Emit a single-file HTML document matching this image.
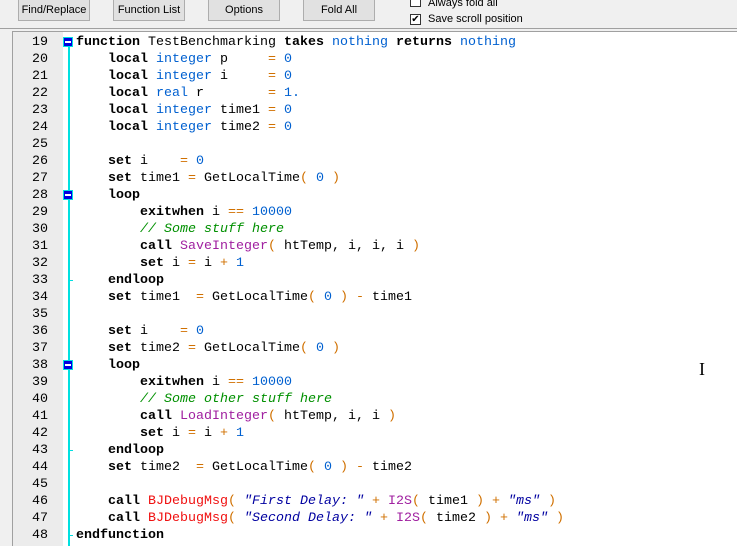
<!DOCTYPE html>
<html><head><style>
body{margin:0;width:737px;height:545px;overflow:hidden;background:#f0f0f0;font-family:"Liberation Sans",sans-serif;position:relative}
.btn{position:absolute;top:-2px;height:23px;width:72px;background:#e1e1e1;border:1px solid #adadad;box-sizing:border-box;font-size:11px;text-align:center;line-height:23px;color:#000}
.tb{position:absolute;left:0;top:0;width:737px;height:28px;border-bottom:1px solid #a0a0a0}
.cb{position:absolute;left:410px;width:11px;height:11px;border:1px solid #333;background:#fff;box-sizing:border-box}
.cl{position:absolute;left:428px;font-size:11px}
.ed{position:absolute;left:12px;top:31px;width:725px;height:514px;border-left:1px solid #a0a0a0;border-top:1px solid #a0a0a0;background:#fff;overflow:hidden}
.gut{position:absolute;left:0;top:0;width:50px;height:514px;background:#ececec}
.vline{position:absolute;left:55px;top:15px;width:2px;background:#00e0e0;height:500px}
.code{position:absolute;left:0;top:2px;font-family:"Liberation Mono",monospace;font-size:13.33px;line-height:17px}
.ln{display:inline-block;width:35px;text-align:right;color:#000;margin-right:28px}
.r{height:17px;position:relative;white-space:pre}
b{font-weight:bold}
.t{color:#0060d0}.n{color:#0060d0}.o{color:#d07000}.c{color:#009000;font-style:italic}.p{color:#a020a0}.rd{color:#f01010}.s{color:#0000a0;font-style:italic}
.fb{position:absolute;left:50px;top:3px;width:10px;height:10px;background:#0000e0;border:1px solid #00e0e0;box-sizing:border-box}
.fb:after{content:"";position:absolute;left:1px;top:3px;width:6px;height:2px;background:#fff}
.tick{position:absolute;left:56px;top:8px;width:4px;height:1px;background:#00e0e0}
</style></head><body>
<div class="tb"></div>
<div class="btn" style="left:18px">Find/Replace</div>
<div class="btn" style="left:113px">Function List</div>
<div class="btn" style="left:208px">Options</div>
<div class="btn" style="left:303px">Fold All</div>
<div class="cb" style="top:-4px"></div><div class="cl" style="top:-3px">Always fold all</div>
<div class="cb" style="top:14px;font-size:10px;line-height:9px;text-align:center">✔</div><div class="cl" style="top:13px">Save scroll position</div>
<div class="ed">
<div class="gut"></div>
<div class="vline"></div>
<div class="code"><div class="r"><span class="ln">19</span><span class="fb"></span><b>function</b> TestBenchmarking <b>takes</b> <span class="t">nothing</span> <b>returns</b> <span class="t">nothing</span></div><div class="r"><span class="ln">20</span>    <b>local</b> <span class="t">integer</span> p     <span class="o">=</span> <span class="n">0</span></div><div class="r"><span class="ln">21</span>    <b>local</b> <span class="t">integer</span> i     <span class="o">=</span> <span class="n">0</span></div><div class="r"><span class="ln">22</span>    <b>local</b> <span class="t">real</span> r        <span class="o">=</span> <span class="n">1.</span></div><div class="r"><span class="ln">23</span>    <b>local</b> <span class="t">integer</span> time1 <span class="o">=</span> <span class="n">0</span></div><div class="r"><span class="ln">24</span>    <b>local</b> <span class="t">integer</span> time2 <span class="o">=</span> <span class="n">0</span></div><div class="r"><span class="ln">25</span></div><div class="r"><span class="ln">26</span>    <b>set</b> i    <span class="o">=</span> <span class="n">0</span></div><div class="r"><span class="ln">27</span>    <b>set</b> time1 <span class="o">=</span> GetLocalTime<span class="o">(</span> <span class="n">0</span> <span class="o">)</span></div><div class="r"><span class="ln">28</span><span class="fb"></span>    <b>loop</b></div><div class="r"><span class="ln">29</span>        <b>exitwhen</b> i <span class="o">==</span> <span class="n">10000</span></div><div class="r"><span class="ln">30</span>        <span class="c">// Some stuff here</span></div><div class="r"><span class="ln">31</span>        <b>call</b> <span class="p">SaveInteger</span><span class="o">(</span> htTemp, i, i, i <span class="o">)</span></div><div class="r"><span class="ln">32</span>        <b>set</b> i <span class="o">=</span> i <span class="o">+</span> <span class="n">1</span></div><div class="r"><span class="ln">33</span><span class="tick"></span>    <b>endloop</b></div><div class="r"><span class="ln">34</span>    <b>set</b> time1  <span class="o">=</span> GetLocalTime<span class="o">(</span> <span class="n">0</span> <span class="o">)</span> <span class="o">-</span> time1</div><div class="r"><span class="ln">35</span></div><div class="r"><span class="ln">36</span>    <b>set</b> i    <span class="o">=</span> <span class="n">0</span></div><div class="r"><span class="ln">37</span>    <b>set</b> time2 <span class="o">=</span> GetLocalTime<span class="o">(</span> <span class="n">0</span> <span class="o">)</span></div><div class="r"><span class="ln">38</span><span class="fb"></span>    <b>loop</b></div><div class="r"><span class="ln">39</span>        <b>exitwhen</b> i <span class="o">==</span> <span class="n">10000</span></div><div class="r"><span class="ln">40</span>        <span class="c">// Some other stuff here</span></div><div class="r"><span class="ln">41</span>        <b>call</b> <span class="p">LoadInteger</span><span class="o">(</span> htTemp, i, i <span class="o">)</span></div><div class="r"><span class="ln">42</span>        <b>set</b> i <span class="o">=</span> i <span class="o">+</span> <span class="n">1</span></div><div class="r"><span class="ln">43</span><span class="tick"></span>    <b>endloop</b></div><div class="r"><span class="ln">44</span>    <b>set</b> time2  <span class="o">=</span> GetLocalTime<span class="o">(</span> <span class="n">0</span> <span class="o">)</span> <span class="o">-</span> time2</div><div class="r"><span class="ln">45</span></div><div class="r"><span class="ln">46</span>    <b>call</b> <span class="rd">BJDebugMsg</span><span class="o">(</span> <span class="s">"First Delay: "</span> <span class="o">+</span> <span class="p">I2S</span><span class="o">(</span> time1 <span class="o">)</span> <span class="o">+</span> <span class="s">"ms"</span> <span class="o">)</span></div><div class="r"><span class="ln">47</span>    <b>call</b> <span class="rd">BJDebugMsg</span><span class="o">(</span> <span class="s">"Second Delay: "</span> <span class="o">+</span> <span class="p">I2S</span><span class="o">(</span> time2 <span class="o">)</span> <span class="o">+</span> <span class="s">"ms"</span> <span class="o">)</span></div><div class="r"><span class="ln">48</span><span class="tick"></span><b>endfunction</b></div></div>
<div style="position:absolute;left:686px;top:327px;font-family:'Liberation Serif',serif;font-size:18px">I</div>
</div>
</body></html>
